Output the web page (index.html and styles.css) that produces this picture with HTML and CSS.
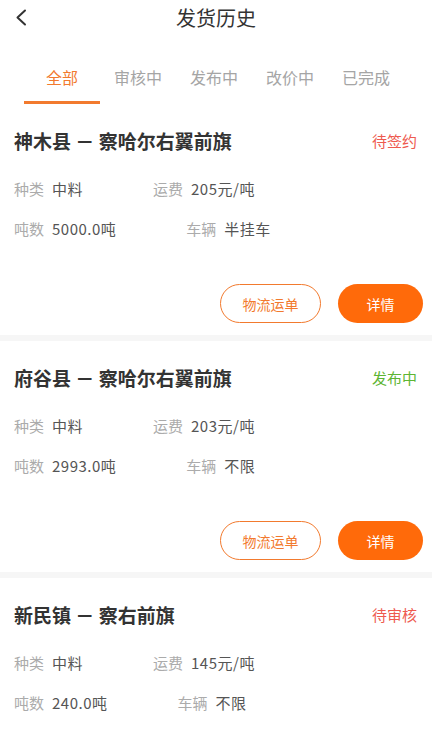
FILE: index.html
```html
<!DOCTYPE html>
<html lang="zh-CN">
<head>
    <meta charset="UTF-8">
    <meta name="viewport" content="width=device-width, initial-scale=1.0">
    <title>发货历史</title>
    <link rel="stylesheet" href="styles.css">
</head>
<body>
    <header class="nav">
        <span class="back">
            <svg width="12" height="17" viewBox="0 0 12 17"><path d="M10 1.5 L2.5 8.5 L10 15.5" fill="none" stroke="#333" stroke-width="2" stroke-linecap="round" stroke-linejoin="round"/></svg>
        </span>
        <h1 class="nav-title">发货历史</h1>
    </header>
    <nav class="tabs">
        <div class="tab active">全部</div>
        <div class="tab">审核中</div>
        <div class="tab">发布中</div>
        <div class="tab">改价中</div>
        <div class="tab">已完成</div>
    </nav>
    <main class="list">
        <div class="card">
            <div class="card-head">
                <span class="route">神木县 － 察哈尔右翼前旗</span>
                <span class="status red">待签约</span>
            </div>
            <div class="row">
                <span class="item"><span class="label">种类</span><span class="value">中料</span></span>
                <span class="item"><span class="label">运费</span><span class="value">205元/吨</span></span>
            </div>
            <div class="row">
                <span class="item"><span class="label">吨数</span><span class="value">5000.0吨</span></span>
                <span class="item"><span class="label">车辆</span><span class="value">半挂车</span></span>
            </div>
            <div class="actions">
                <button class="btn btn-outline">物流运单</button>
                <button class="btn btn-fill">详情</button>
            </div>
        </div>
        <div class="card">
            <div class="card-head">
                <span class="route">府谷县 － 察哈尔右翼前旗</span>
                <span class="status green">发布中</span>
            </div>
            <div class="row">
                <span class="item"><span class="label">种类</span><span class="value">中料</span></span>
                <span class="item"><span class="label">运费</span><span class="value">203元/吨</span></span>
            </div>
            <div class="row">
                <span class="item"><span class="label">吨数</span><span class="value">2993.0吨</span></span>
                <span class="item"><span class="label">车辆</span><span class="value">不限</span></span>
            </div>
            <div class="actions">
                <button class="btn btn-outline">物流运单</button>
                <button class="btn btn-fill">详情</button>
            </div>
        </div>
        <div class="card">
            <div class="card-head">
                <span class="route">新民镇 － 察右前旗</span>
                <span class="status red">待审核</span>
            </div>
            <div class="row">
                <span class="item"><span class="label">种类</span><span class="value">中料</span></span>
                <span class="item"><span class="label">运费</span><span class="value">145元/吨</span></span>
            </div>
            <div class="row">
                <span class="item"><span class="label">吨数</span><span class="value">240.0吨</span></span>
                <span class="item"><span class="label">车辆</span><span class="value">不限</span></span>
            </div>
            <div class="actions">
                <button class="btn btn-outline">物流运单</button>
                <button class="btn btn-fill">详情</button>
            </div>
        </div>
    </main>
</body>
</html>
```

FILE: styles.css
```css
body {
    font-family: "Noto Sans CJK SC", "Noto Sans", sans-serif;
    background-color: #fff;
    margin: 0;
    padding: 0;
    overflow: hidden;
}
.nav {
    position: relative;
    height: 36px;
    display: flex;
    align-items: center;
    justify-content: center;
}
.back {
    position: absolute;
    left: 15px;
    top: 9px;
    display: flex;
}
.nav-title {
    margin: 0;
    font-size: 20px;
    font-weight: normal;
    color: #333;
    line-height: 36px;
}
.tabs {
    display: flex;
    padding-left: 24px;
    height: 68px;
}
.tab {
    width: 76px;
    padding-top: 29px;
    line-height: 24px;
    text-align: center;
    font-size: 16px;
    color: #a5a5a5;
    box-sizing: border-box;
    height: 68px;
}
.tab.active {
    color: #f27a2e;
    border-bottom: 3px solid #f27a2e;
}
.list {
    display: flex;
    flex-direction: column;
    gap: 6px;
    background-color: #f6f6f6;
}
.card {
    background-color: #fff;
    padding: 24px 9px 12px 14px;
}
.card-head {
    display: flex;
    justify-content: space-between;
    align-items: center;
    line-height: 26px;
}
.route {
    font-size: 19px;
    font-weight: bold;
    color: #333;
}
.status {
    font-size: 15px;
    margin-right: 6px;
}
.status.red {
    color: #ee5a4f;
}
.status.green {
    color: #5db533;
}
.row {
    display: flex;
    gap: 70px;
    line-height: 40px;
    font-size: 15px;
}
.card-head + .row {
    margin-top: 15px;
}
.label {
    color: #ababab;
    margin-right: 8px;
}
.value {
    color: #555;
    letter-spacing: 0.5px;
}
.actions {
    display: flex;
    justify-content: flex-end;
    gap: 17px;
    margin-top: 35px;
}
.btn {
    height: 39px;
    border-radius: 20px;
    font-family: inherit;
    font-size: 14px;
    padding: 0;
    box-sizing: border-box;
}
.btn-outline {
    width: 101px;
    background: #fff;
    border: 1px solid #f27a2e;
    color: #f27a2e;
}
.btn-fill {
    width: 85px;
    background: #ff6a0a;
    border: none;
    color: #fff;
}
```
